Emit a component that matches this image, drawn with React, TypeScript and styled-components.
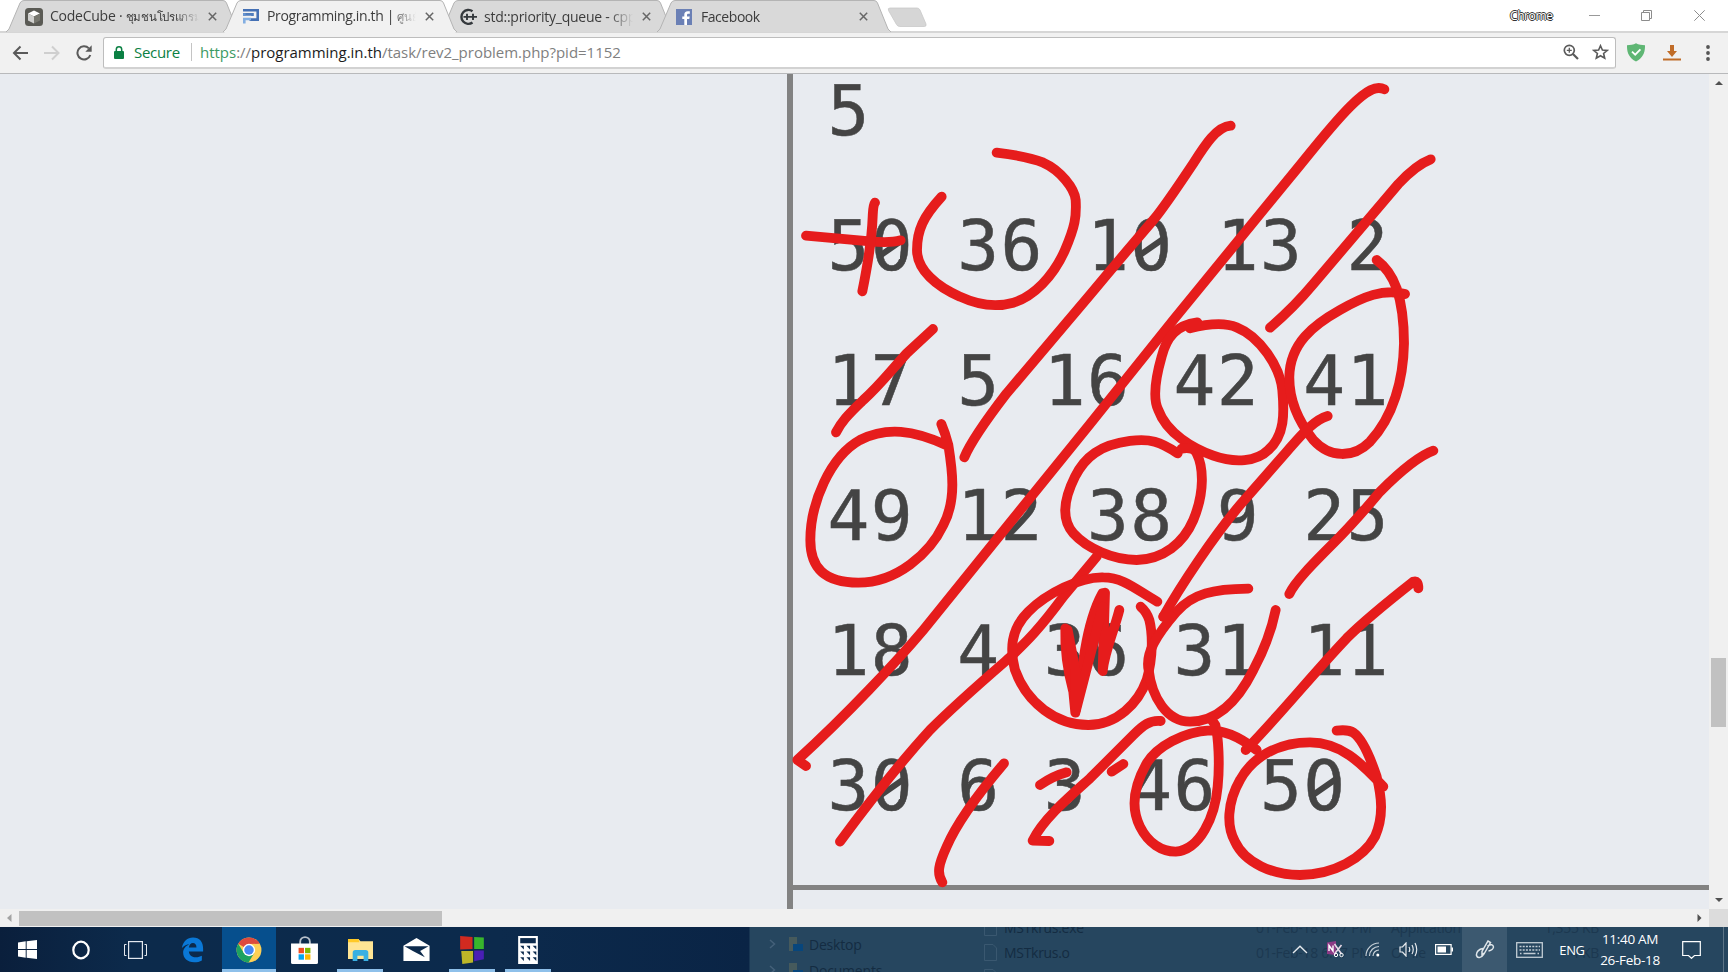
import React from "react";
import styled, { createGlobalStyle } from "styled-components";

const Global = createGlobalStyle`
  * { box-sizing: border-box; }
  html, body { margin: 0; padding: 0; overflow: hidden; background: #fff; }
  body { font-family: "Open Sans", "Noto Sans", sans-serif; }
  svg { display: block; }
`;

const Screen = styled.div`
  width: 1728px;
  height: 972px;
  display: flex;
  flex-direction: column;
  overflow: hidden;
`;

/* ---------- tab strip ---------- */
const TabStrip = styled.div`
  height: 33px;
  display: flex;
  align-items: flex-start;
  padding-left: 6px;
  background: #fff;
  border-bottom: 2px solid #d6d6d6;
`;

const Tab = styled.div<{ $active?: boolean }>`
  position: relative;
  z-index: ${(p) => (p.$active ? 2 : 1)};
  width: 234px;
  height: 33px;
  flex: none;
  margin-right: -17px;
  padding: 0 17px 0 19px;
  display: flex;
  align-items: center;
`;

const TabShape = styled.svg`
  position: absolute;
  left: 0;
  top: 0;
  z-index: -1;
`;

const TabIcon = styled.div`
  width: 18px;
  height: 18px;
  flex: none;
`;

const TabTitle = styled.div<{ $spacing: number }>`
  width: 149px;
  margin: 0 0 0 7px;
  overflow: hidden;
  white-space: nowrap;
  font-size: 14px;
  line-height: 24px;
  letter-spacing: ${(p) => p.$spacing}px;
  color: #3c3c3c;
  -webkit-mask-image: linear-gradient(to right, #000 84%, transparent 100%);
`;

const Thai = styled.span`
  font-size: 11.5px;
  letter-spacing: -0.3px;
`;

const TabClose = styled.svg`
  margin-left: 9px;
  flex: none;
`;

const NewTab = styled.svg`
  margin: 7px 0 0 1px;
`;

const WindowControls = styled.div`
  margin-left: auto;
  height: 31px;
  display: flex;
  align-items: center;
`;

const ChromeLabel = styled.span`
  width: 48px;
  margin-right: 8px;
  font-size: 12px;
  letter-spacing: -0.4px;
  color: #fff;
  text-shadow: 1px 0 #333, -1px 0 #333, 0 1px #333, 0 -1px #333;
`;

const WindowButton = styled.div<{ $w: number }>`
  width: ${(p) => p.$w}px;
  display: flex;
  justify-content: center;
`;

/* ---------- toolbar ---------- */
const Toolbar = styled.div`
  height: 41px;
  display: flex;
  align-items: center;
  padding: 0 12px 1px 12px;
  background: #f1f1f1;
  border-bottom: 1px solid #b8b9bb;
`;

const NavButtons = styled.div`
  width: 91px;
  display: flex;
  align-items: center;
  gap: 15px;
`;

const Omnibox = styled.div`
  width: 1513px;
  height: 32px;
  display: flex;
  align-items: center;
  padding: 0 6px 0 10px;
  background: #fff;
  border: 1px solid #bdbdbd;
  border-bottom: 2px solid #d2d2d2;
  border-radius: 3px;
`;

const Secure = styled.span`
  margin-left: 10px;
  width: 57px;
  font-size: 15px;
  letter-spacing: -0.3px;
  color: #0b8043;
`;

const Separator = styled.span`
  width: 1px;
  height: 18px;
  background: #c4c4c4;
`;

const Url = styled.span`
  margin-left: 8px;
  flex: 1;
  font-size: 15px;
  letter-spacing: -0.02px;
  color: #808080;
  white-space: nowrap;
`;

const Scheme = styled.span` color: #3c9a64; `;
const Host = styled.span` color: #1c1c1c; `;

const OmniIcons = styled.div`
  display: flex;
  gap: 13px;
`;

const Extensions = styled.div`
  margin-left: 11px;
  display: flex;
  align-items: center;
`;

const Slot = styled.div<{ $w: number }>`
  width: ${(p) => p.$w}px;
  flex: none;
`;

/* ---------- page ---------- */
const Viewport = styled.div`
  height: 853px;
  display: grid;
  grid-template-columns: 1709px 19px;
  grid-template-rows: 835px 18px;
`;

const Page = styled.div`
  position: relative;
  overflow: hidden;
  display: flex;
  background: #e8ebf0;
`;

const BlankCell = styled.div`
  width: 787px;
  flex: none;
`;

const SampleColumn = styled.div`
  flex: 1;
  border-left: 6px solid #828282;
`;

const SampleCell = styled.div`
  height: 816px;
  border-bottom: 5px solid #828282;
  overflow: hidden;
`;

const Sample = styled.pre`
  margin: -31px 0 0 34.5px;
  font-family: "DejaVu Sans Mono", monospace;
  font-size: 69.5px;
  line-height: 135px;
  letter-spacing: 1.4px;
  color: #444;
  -webkit-text-stroke: 0.5px #444;
`;

const Zero = styled.span`
  position: relative;
  &::before {
    content: "";
    position: absolute;
    left: 14px;
    top: 30px;
    width: 15px;
    height: 24px;
    background: #e8ebf0;
  }
  &::after {
    content: "";
    position: absolute;
    left: 7px;
    top: 39px;
    width: 29px;
    height: 6px;
    background: #444;
    transform: rotate(-35deg);
  }
`;

const Ink = styled.svg`
  position: absolute;
  left: 0;
  top: 0;
`;

const VScroll = styled.div`
  display: flex;
  flex-direction: column;
  align-items: center;
  background: #f0f0f0;
`;

const VTrack = styled.div`
  flex: 1;
  width: 15px;
  padding-top: 566px;
`;

const VThumb = styled.div`
  height: 69px;
  background: #c1c1c1;
`;

const HScroll = styled.div`
  display: flex;
  align-items: center;
  background: #f0f0f0;
`;

const HTrack = styled.div`
  flex: 1;
`;

const HThumb = styled.div`
  width: 423px;
  height: 15px;
  margin-left: 1px;
  background: #c1c1c1;
`;

const ArrowBox = styled.div`
  width: 18px;
  height: 18px;
  flex: none;
  display: flex;
  align-items: center;
  justify-content: center;
`;

const Corner = styled.div`
  background: #dcdcdc;
`;

/* ---------- taskbar ---------- */
const Taskbar = styled.div`
  position: relative;
  height: 45px;
  display: flex;
  background: linear-gradient(90deg, #0a1f3c 0, #0c2a4b 130px, #0c2a4c 500px, #0a2445 749px, #26465f 750px);
  overflow: hidden;
`;

const Pinned = styled.div`
  width: 749px;
  flex: none;
  display: flex;
`;

const TaskButton = styled.div<{ $w: number; $active?: boolean }>`
  width: ${(p) => p.$w}px;
  height: 45px;
  flex: none;
  display: flex;
  align-items: center;
  justify-content: center;
  background-color: ${(p) => (p.$active ? "#064f8d" : "transparent")};
`;

const Running = styled(TaskButton)<{ $inset: number }>`
  background-image: linear-gradient(#8ec0ea, #8ec0ea);
  background-repeat: no-repeat;
  background-position: center bottom;
  background-size: calc(100% - ${(p) => p.$inset * 2}px) 3px;
`;

const GhostTree = styled.div`
  position: absolute;
  left: 767px;
  top: 4px;
  font-size: 14px;
  letter-spacing: -0.2px;
  color: #142c42;
`;

const GhostTreeRow = styled.div`
  height: 26px;
  display: flex;
  align-items: center;
  gap: 6px;
  svg:first-child { margin-right: 5px; }
`;

const GhostFiles = styled.div`
  position: absolute;
  left: 984px;
  top: -12px;
  font-size: 14px;
  letter-spacing: -0.3px;
  color: #142c42;
`;

const GhostFileRow = styled.div`
  height: 25px;
  display: grid;
  grid-template-columns: 20px 252px 135px 208px;
  align-items: center;
  white-space: nowrap;
`;

const Faint = styled.span`
  color: #1c3850;
`;

const FileMeta = styled.div`
  display: flex;
  justify-content: space-between;
`;

const Tray = styled.div`
  position: relative;
  margin-left: auto;
  height: 45px;
  display: flex;
  align-items: center;
  color: #fff;
`;

const TrayItem = styled.div<{ $w: number; $lit?: boolean }>`
  width: ${(p) => p.$w}px;
  height: 45px;
  display: flex;
  align-items: center;
  justify-content: center;
  background: ${(p) => (p.$lit ? "#3c5970" : "transparent")};
`;

const Lang = styled.span`
  font-size: 13px;
  letter-spacing: -0.4px;
`;

const Clock = styled.div`
  width: 64px;
  margin-left: 5px;
  text-align: center;
  font-size: 13.5px;
  line-height: 20.5px;
  letter-spacing: -0.3px;
  white-space: nowrap;
`;

const ShowDesktop = styled.div`
  width: 5px;
  height: 45px;
  margin-left: 3px;
  border-left: 1px solid #5d7587;
`;

const strokes = [
  "M78 497 L270 514 Q330 520 362 511",
  "M285 398 C279 406 279 420 278 440 C275 520 262 590 247 664",
  "M485 380 C430 440 411 480 411 540 C411 600 470 650 540 680 C600 708 650 712 700 698 C760 680 820 620 855 540 C885 470 890 440 887 390 C884 355 840 300 790 278 C750 262 700 254 650 248",
  "M459 777 L380 850 C330 905 300 945 250 990 C200 1038 185 1055 168 1087",
  "M500 1126 C400 1080 320 1070 240 1110 C150 1160 91 1300 91 1410 C91 1490 130 1538 235 1538 C350 1538 450 1450 490 1365 C530 1290 517 1200 505 1125 Q496 1090 484 1062",
  "M1352 167 C1310 170 1275 225 1240 280 C1190 355 1150 415 1120 450 C1060 520 1000 590 930 675 L680 970 C630 1035 575 1110 553 1162",
  "M1813 58 C1790 45 1760 60 1710 110 C1650 170 1590 250 1530 322 L1180 750 L930 1062 L640 1420 L430 1680 C350 1775 200 1935 52 2070 L78 2088",
  "M1952 268 C1915 282 1880 315 1855 342 L1600 642 C1560 690 1530 722 1470 773",
  "M1252 757 C1190 765 1160 800 1145 860 C1125 930 1120 990 1135 1020 C1160 1090 1240 1135 1300 1157 C1365 1180 1430 1175 1465 1140 C1515 1095 1513 1030 1507 960 C1500 890 1440 800 1370 772 C1330 755 1280 762 1230 775",
  "M1875 672 C1810 655 1750 680 1680 720 C1600 765 1530 820 1528 920 C1527 1000 1560 1060 1600 1110 C1650 1165 1720 1165 1770 1115 C1840 1040 1870 930 1872 820 C1872 760 1865 700 1850 655 Q1830 600 1790 570",
  "M1643 1038 C1600 1050 1560 1100 1520 1145 L1380 1305 C1300 1400 1200 1550 1150 1640",
  "M1193 1150 C1140 1115 1110 1105 1050 1113 C960 1125 915 1160 885 1220 C850 1290 845 1350 880 1390 C920 1435 1000 1470 1070 1470 C1150 1468 1210 1420 1240 1350 C1275 1265 1270 1190 1250 1150 Q1240 1130 1205 1136",
  "M1960 1142 C1910 1160 1850 1215 1800 1265 C1750 1325 1710 1370 1660 1420 C1600 1480 1545 1535 1528 1572",
  "M950 1460 L850 1580 C780 1675 740 1715 690 1762 C600 1840 530 1900 450 1980 C340 2100 250 2220 180 2315",
  "M1132 1595 C1070 1560 1030 1522 970 1522 C900 1520 800 1570 745 1625 C690 1680 690 1740 705 1800 C740 1900 830 1965 925 1965 C1010 1965 1075 1900 1100 1830 C1120 1760 1118 1690 1108 1650 Q1100 1625 1082 1610",
  "M856 1675 C854 1740 865 1810 880 1865 L886 1928 L915 1740 C925 1680 945 1610 967 1570 L975 1568 L968 1803 C975 1740 1000 1690 1018 1620",
  "M863 1680 L886 1800 L888 1920 L932 1750 L968 1610",
  "M1405 1556 C1300 1557 1240 1570 1190 1625 C1130 1695 1095 1750 1106 1800 C1115 1880 1160 1955 1230 1955 C1320 1955 1380 1880 1420 1800 C1455 1735 1475 1680 1487 1620",
  "M1150 1640 L1175 1640",
  "M1915 1555 Q1915 1530 1900 1535 C1830 1590 1760 1645 1700 1705 C1600 1810 1500 1935 1397 2040",
  "M1142 1953 C1110 1950 1090 1965 1060 1995 L930 2125 C880 2170 790 2245 758 2312 L808 2313",
  "M780 2145 Q820 2118 860 2107",
  "M995 2105 L1030 2082",
  "M1430 2040 C1370 1995 1330 1982 1290 1981 C1210 1985 1130 2030 1100 2080 C1055 2160 1055 2220 1080 2270 C1105 2320 1145 2345 1187 2345 C1260 2340 1305 2240 1313 2150 C1320 2080 1315 2000 1306 1965 L1292 1945",
  "M1810 2150 C1740 2075 1680 2017 1590 2017 C1490 2017 1415 2065 1380 2130 C1340 2200 1340 2270 1365 2315 C1395 2380 1480 2415 1560 2415 C1660 2415 1750 2365 1785 2300 C1812 2240 1805 2180 1790 2120 C1770 2060 1745 2005 1720 1988 Q1705 1978 1670 1982",
  "M672 2080 C600 2165 530 2260 500 2330 C475 2385 470 2410 487 2437",
];

const lines = ["5", "50 36 10 13 2", "17 5 16 42 41", "49 12 38 9 25", "18 4 36 31 11", "30 6 3 46 50"];

function CubeIcon() {
  return (
    <svg width="18" height="18" viewBox="0 0 18 18">
      <rect width="18" height="18" rx="3.5" fill="#5a5a54" />
      <path d="M9 2.6 15 5.6 9 8.4 3 5.6Z" fill="#fff" />
      <path d="M3 5.6 9 8.4V15.5L3 12.6Z" fill="#d0d0ce" />
      <path d="M15 5.6 9 8.4V15.5L15 12.6Z" fill="#77776f" />
    </svg>
  );
}

function ProgIcon() {
  return (
    <svg width="18" height="18" viewBox="0 0 18 18" fill="none" strokeWidth="2.6">
      <path d="M1 2.2H15.7V11.6H7.5" stroke="#4470b4" />
      <path d="M1 6.4H10.5V8" stroke="#4f7cbc" />
      <path d="M2.3 15.5V11H9" stroke="#82aee2" />
      <path d="M2.3 8V5.2" stroke="#6794d0" />
    </svg>
  );
}

function CppIcon() {
  return (
    <svg width="18" height="18" viewBox="0 0 18 18" fill="none" stroke="#34383c">
      <path d="M13.5 3.2A7 7 0 1 0 13.5 14.6" strokeWidth="2.4" />
      <path d="M4.500 8.900H18M8 5.800V12M14 5.800V12" strokeWidth="1.900" />
    </svg>
  );
}

function FbIcon() {
  return (
    <svg width="16" height="18" viewBox="0 0 16 18">
      <rect y="1" width="16" height="16" fill="#6b80b5" />
      <path d="M11 17V11H13.3L13.7 8.4H11V7C11 6.2 11.4 5.7 12.4 5.7H13.8V3.3H11.8C9.5 3.3 8.3 4.6 8.3 6.7V8.4H6.3V11H8.3V17Z" fill="#fff" />
    </svg>
  );
}

const tabs = [
  { title: "CodeCube · ", thai: "ชุมชนโปรแกรมเมอร์", icon: <CubeIcon />, spacing: -0.25 },
  { title: "Programming.in.th | ", thai: "ศูนย์กลาง", icon: <ProgIcon />, spacing: -0.35, active: true },
  { title: "std::priority_queue - cppreference", icon: <CppIcon />, spacing: -0.25 },
  { title: "Facebook", icon: <FbIcon />, spacing: -0.45 },
];

function Triangle({ d, color }: { d: string; color: string }) {
  return (
    <svg width="10" height="10" viewBox="0 0 10 10">
      <path d={d} fill={color} />
    </svg>
  );
}

function FileIcon() {
  return (
    <svg width="13" height="17" viewBox="0 0 13 17" fill="none" stroke="#3a5870">
      <path d="M.5 .5H9L12.5 4V16.5H.5Z" />
    </svg>
  );
}

export default function App() {
  return (
    <Screen>
      <Global />
      <TabStrip>
        {tabs.map((t) => (
          <Tab key={t.title} $active={t.active}>
            <TabShape width="234" height="33" viewBox="0 0 234 33">
              <path
                d="M0 32 L3 29 L14 3 Q15.3 .5 18 .5 H217 Q219.5 .5 220.5 3 L231 29 L234 32"
                fill={t.active ? "#f1f1f1" : "#d9d9d9"}
                stroke="#b4b4b4"
              />
              {t.active && <rect x="1.5" y="31.3" width="231" height="2" fill="#f1f1f1" />}
            </TabShape>
            <TabIcon>{t.icon}</TabIcon>
            <TabTitle $spacing={t.spacing}>
              {t.title}
              {t.thai && <Thai>{t.thai}</Thai>}
            </TabTitle>
            <TabClose width="9" height="9" viewBox="0 0 9 9">
              <path d="M.8 .8 8.2 8.2M8.2 .8 .8 8.2" stroke="#666" strokeWidth="1.5" />
            </TabClose>
          </Tab>
        ))}
        <NewTab width="52" height="21" viewBox="0 0 52 21">
          <path d="M15 1H42Q44 1 45 3L51 17Q51.500 19.500 49.500 19.500H25Q22.500 19.500 21.500 17.500L13.500 3.500Q12.500 1 15 1Z" fill="#d6d6d6" stroke="#c9c9c9" strokeWidth=".8" />
        </NewTab>
        <WindowControls>
          <ChromeLabel>Chrome</ChromeLabel>
          <WindowButton $w={57}>
            <svg width="11" height="11" viewBox="0 0 11 11"><path d="M0 5.500H11" stroke="#999" /></svg>
          </WindowButton>
          <WindowButton $w={47}>
            <svg width="11" height="11" viewBox="0 0 11 11" fill="none" stroke="#8c8c8c">
              <path d="M.5 2.500H8.500V10.500H.5ZM2.500 2.500V.5H10.500V8.500H8.500" />
            </svg>
          </WindowButton>
          <WindowButton $w={58}>
            <svg width="11" height="11" viewBox="0 0 11 11"><path d="M.3 .3 10.700 10.700M10.700 .3 .3 10.700" stroke="#8c8c8c" /></svg>
          </WindowButton>
        </WindowControls>
      </TabStrip>

      <Toolbar>
        <NavButtons>
          <svg width="17" height="16" viewBox="0 0 17 16" fill="none" stroke="#5a5a5a" strokeWidth="2">
            <path d="M16 8H3M8.500 1.500 2 8 8.500 14.500" />
          </svg>
          <svg width="17" height="16" viewBox="0 0 17 16" fill="none" stroke="#cfcfcf" strokeWidth="2">
            <path d="M0 8H14M8 1.500 14.500 8 8 14.500" />
          </svg>
          <svg width="17" height="16" viewBox="0 0 17 16" fill="none">
            <path d="M14.300 10A6.600 6.600 0 1 1 12.900 3.400" stroke="#5a5a5a" strokeWidth="2" />
            <path d="M15.700 .3V6.700H9.300Z" fill="#5a5a5a" />
          </svg>
        </NavButtons>
        <Omnibox>
          <svg width="10" height="13" viewBox="0 0 10 13">
            <rect y="5" width="10" height="8" rx="1" fill="#0b8043" />
            <path d="M2.300 5.500V3.500A2.700 2.700 0 0 1 7.700 3.500V5.500" fill="none" stroke="#0b8043" strokeWidth="1.500" />
          </svg>
          <Secure>Secure</Secure>
          <Separator />
          <Url>
            <Scheme>https</Scheme>://<Host>programming.in.th</Host>/task/rev2_problem.php?pid=1152
          </Url>
          <OmniIcons>
            <svg width="16" height="16" viewBox="0 0 16 16" fill="none" stroke="#5a5a5a">
              <circle cx="6.300" cy="6.300" r="5" strokeWidth="1.700" />
              <path d="M10 10 15 15" strokeWidth="2.200" />
              <path d="M6.300 3.800V8.800M3.800 6.300H8.800" strokeWidth="1.300" />
            </svg>
            <svg width="17" height="16" viewBox="0 0 17 16" fill="none" stroke="#5a5a5a" strokeWidth="1.600">
              <path d="M8.500 1.700 10.400 6 15.200 6.400 11.600 9.500 12.700 14.200 8.500 11.700 4.300 14.200 5.400 9.500 1.800 6.400 6.600 6Z" />
            </svg>
          </OmniIcons>
        </Omnibox>
        <Extensions>
          <Slot $w={36}>
            <svg width="18" height="19" viewBox="0 0 18 19">
              <path d="M9 .3C11.500 1.700 15 2.200 18 2.200C18.200 9.500 16.200 14.800 9 18.600C1.800 14.800-.2 9.500 0 2.200C3 2.200 6.500 1.700 9 .3Z" fill="#5fb674" />
              <path d="M5 8.700 8.200 11.700 13.400 6.300" stroke="#fff" strokeWidth="1.800" fill="none" />
            </svg>
          </Slot>
          <Slot $w={43}>
            <svg width="18" height="16" viewBox="0 0 18 16" fill="#c06c28">
              <path d="M7 0H11V6H14L9 12 4 6H7Z" />
              <rect y="13.500" width="18" height="2" />
            </svg>
          </Slot>
          <svg width="4" height="16" viewBox="0 0 4 16" fill="#555">
            <circle cx="2" cy="2" r="1.900" /><circle cx="2" cy="8" r="1.900" /><circle cx="2" cy="14" r="1.900" />
          </svg>
        </Extensions>
      </Toolbar>

      <Viewport>
        <Page>
          <BlankCell />
          <SampleColumn>
            <SampleCell>
              <Sample>
                {lines.map((line, i) => (
                  <React.Fragment key={i}>
                    {line.split("").map((c, j) => (c === "0" ? <Zero key={j}>0</Zero> : c))}
                    {"\n"}
                  </React.Fragment>
                ))}
              </Sample>
            </SampleCell>
          </SampleColumn>
          <Ink width="1709" height="835" viewBox="0 0 1709 835">
            <g transform="translate(780 -4) scale(.33333)" fill="none" stroke="#e61c1c" strokeWidth="29.500" strokeLinecap="round" strokeLinejoin="round">
              {strokes.map((d, i) => (
                <path key={i} d={d} />
              ))}
            </g>
          </Ink>
        </Page>
        <VScroll>
          <ArrowBox><Triangle d="M5 3 9 7H1Z" color="#505050" /></ArrowBox>
          <VTrack><VThumb /></VTrack>
          <ArrowBox><Triangle d="M5 7 9 3H1Z" color="#505050" /></ArrowBox>
        </VScroll>
        <HScroll>
          <ArrowBox><Triangle d="M3 5 7.500 1V9Z" color="#a3a3a3" /></ArrowBox>
          <HTrack><HThumb /></HTrack>
          <ArrowBox><Triangle d="M6.500 5 2.500 1V9Z" color="#505050" /></ArrowBox>
        </HScroll>
        <Corner />
      </Viewport>

      <Taskbar>
        <GhostTree>
          {["Desktop", "Documents"].map((name) => (
            <GhostTreeRow key={name}>
              <svg width="10" height="10" viewBox="0 0 10 10"><path d="M3 1 7.500 5 3 9" stroke="#446079" fill="none" strokeWidth="1.500" /></svg>
              <svg width="15" height="15" viewBox="0 0 15 15">
                <path d="M1 0H9V14H1Z" fill="#465a5c" />
                <rect x="5" y="7" width="10" height="7" fill="#07467c" />
              </svg>
              <span>{name}</span>
            </GhostTreeRow>
          ))}
        </GhostTree>
        <GhostFiles>
          {[
            ["MSTkrus.exe", "01-Feb-18 6:17 PM", "Application", "1,355 KB"],
            ["MSTkrus.o", "01-Feb-18 6:17 PM", "O File", "4 KB"],
            ["MSTkrus", "01-Feb-18 5:59 PM", "C File", "1 KB"],
          ].map((r) => (
            <GhostFileRow key={r[0]}>
              <FileIcon />
              <span>{r[0]}</span>
              <Faint>{r[1]}</Faint>
              <FileMeta>
                <Faint>{r[2]}</Faint>
                <Faint>{r[3]}</Faint>
              </FileMeta>
            </GhostFileRow>
          ))}
        </GhostFiles>
        <Pinned>
          <TaskButton $w={54}>
            <svg width="19" height="19" viewBox="0 0 18 18" fill="#fff">
              <path d="M0 2.300 7.300 1.300V8.500H0ZM8.200 1.200 18 0V8.500H8.200ZM0 9.400H7.300V16.700L0 15.700ZM8.200 9.400H18V18L8.200 16.800Z" />
            </svg>
          </TaskButton>
          <TaskButton $w={54}>
            <svg width="20" height="20" viewBox="0 0 20 20"><ellipse cx="10" cy="10" rx="7.700" ry="8.300" fill="none" stroke="#fff" strokeWidth="2.200" /></svg>
          </TaskButton>
          <TaskButton $w={54}>
            <svg width="23" height="18" viewBox="0 0 23 18" fill="none" stroke="#e4e8ee">
              <rect x="4.600" y=".6" width="13.800" height="16.800" strokeWidth="1.200" />
              <path d="M2.500 3.500H.5V14.500H2.500M20.500 3.500H22.500V14.500H20.500" />
            </svg>
          </TaskButton>
          <TaskButton $w={60}>
            <svg width="23" height="26" viewBox="0 0 22 25">
              <path d="M.8 10.500C2 4 6 .5 11.500 .5C18 .5 21.200 5 21.200 11V14H7.500C8 18 11 19.500 14 19.500C16.500 19.500 18.500 18.800 20 18V22.500C18 23.700 15.500 24.300 12.500 24.300C6 24.300 2 20.500 2 15C2 11.500 4.500 8.500 8 7C5.500 7 2.800 8.500.8 10.500ZM7.500 10H14.800C14.800 7.200 13.500 5.700 11.400 5.700C9.300 5.700 7.900 7.500 7.500 10Z" fill="#0a78d7" />
            </svg>
          </TaskButton>
          <Running $w={54} $active $inset={0}>
            <svg width="26" height="26" viewBox="0 0 24 24">
              <circle cx="12" cy="12" r="11.500" fill="#fdd056" />
              <path d="M12 12 2.040 6.250A11.500 11.500 0 0 1 21.960 6.250L12 6.500Z" fill="#dc4a3e" />
              <path d="M2.040 6.250A11.500 11.500 0 0 0 11.600 23.500L16.800 14.700 7.300 14.700Z" fill="#1da261" />
              <circle cx="12" cy="12" r="5.700" fill="#fff" />
              <circle cx="12" cy="12" r="4.400" fill="#4587f4" />
            </svg>
          </Running>
          <TaskButton $w={56}>
            <svg width="27" height="28" viewBox="0 0 25 26">
              <path d="M8.500 8V5.500A4.500 4.500 0 0 1 17.500 5.500V8" fill="none" stroke="#b9c2cc" strokeWidth="1.700" />
              <path d="M0 7H25V24.500Q25 26 23.500 26H1.500Q0 26 0 24.500Z" fill="#fff" />
              <rect x="7" y="11" width="5" height="5" fill="#f04e23" /><rect x="13" y="11" width="5" height="5" fill="#80b900" />
              <rect x="7" y="17" width="5" height="5" fill="#05a5ee" /><rect x="13" y="17" width="5" height="5" fill="#fdb900" />
            </svg>
          </TaskButton>
          <Running $w={56} $inset={5}>
            <svg width="25" height="23" viewBox="0 0 24 22">
              <path d="M0 1H10L12 3H24V20H0Z" fill="#ffe594" />
              <path d="M0 1H10L11 4H0Z" fill="#ffc926" />
              <path d="M4.500 22V14Q4.500 11.500 7 11.500H17Q19.500 11.500 19.500 14V22H15V17H9V22Z" fill="#3ab0e2" />
            </svg>
          </Running>
          <TaskButton $w={56}>
            <svg width="27" height="23" viewBox="0 0 25 22">
              <path d="M0 7.500 12.500 0 25 7.500V22H0Z" fill="#fff" />
              <path d="M1 7.800H24L16 12.500 20.500 18.500 9 12.500Z" fill="#0c2a4c" />
            </svg>
          </TaskButton>
          <Running $w={56} $inset={5}>
            <svg width="26" height="28" viewBox="0 0 24 26">
              <path d="M1 0 12.500 1V12L1 12.500Z" fill="#d12a20" /><path d="M14 1 23 1.500V12H14Z" fill="#38b52c" />
              <path d="M2 14H13V24.500L3 26Z" fill="#bdb728" /><path d="M14 13.500H23V21.500L14 23.500Z" fill="#4a1fb5" />
            </svg>
          </Running>
          <Running $w={56} $inset={5}>
            <svg width="20" height="28" viewBox="0 0 19 27">
              <rect width="19" height="27" fill="#fff" />
              <rect x="2" y="2" width="15" height="5" fill="#0c2a4c" />
              {[9.5, 15, 20.5].map((y) => [2, 8, 14].map((x) => <path key={`${x}-${y}`} d={`M${x} ${y}h3.500v3.500z`} fill="#0c2a4c" />))}
            </svg>
          </Running>
        </Pinned>
        <Tray>
          <TrayItem $w={34}>
            <svg width="16" height="9" viewBox="0 0 16 9"><path d="M1 8 8 1.200 15 8" fill="none" stroke="#e6eaee" strokeWidth="1.400" /></svg>
          </TrayItem>
          <TrayItem $w={37}>
            <svg width="17" height="17" viewBox="0 0 17 17" fill="none">
              <path d="M0 1.500 9 0V14L0 13Z" fill="#8c3b86" />
              <path d="M2 10V4.500L6 10V4.500" stroke="#fff" strokeWidth="1.400" />
              <path d="M7.500 3 14.500 13M14.500 4 7.500 13" stroke="#e6d7e6" strokeWidth="1.600" />
              <circle cx="9" cy="14" r="1.700" stroke="#fff" /><circle cx="14.500" cy="14" r="1.700" stroke="#fff" />
            </svg>
          </TrayItem>
          <TrayItem $w={36}>
            <svg width="15" height="15" viewBox="0 0 15 15" fill="none" stroke="#c6d0d8" strokeWidth="1.200">
              <path d="M1 14A13 13 0 0 1 14 1M4.500 14A9.500 9.500 0 0 1 14 4.500M8 14A6 6 0 0 1 14 8" />
              <circle cx="12.800" cy="13" r="1.500" fill="#fff" stroke="none" />
            </svg>
          </TrayItem>
          <TrayItem $w={36}>
            <svg width="19" height="15" viewBox="0 0 19 15" fill="none" stroke="#e6eaee" strokeWidth="1.200">
              <path d="M1 5H3.500L7 1V14L3.500 10H1ZM10 5Q11.500 7.500 10 10M13 3Q15.500 7.500 13 12M16 1Q19.500 7.500 16 14" />
            </svg>
          </TrayItem>
          <TrayItem $w={36}>
            <svg width="18" height="11" viewBox="0 0 18 11">
              <rect x=".6" y=".6" width="15.500" height="9.800" fill="none" stroke="#fff" strokeWidth="1.200" />
              <rect x="2.500" y="2.500" width="8.500" height="6" fill="#fff" /><rect x="16.500" y="3.500" width="1.500" height="4" fill="#fff" />
            </svg>
          </TrayItem>
          <TrayItem $w={45} $lit>
            <svg width="20" height="20" viewBox="0 0 20 20" fill="none" stroke="#e0e6ea" strokeWidth="1.500">
              <path d="M8 8.500C4 9 1 12 1.500 15.500C2.500 19 7 17.500 9 14L15.500 2.500L13 1L7 11.500V14.500L10 12.500M12.500 6Q18 3 18.500 7Q18 10 13.500 11" />
            </svg>
          </TrayItem>
          <TrayItem $w={44}>
            <svg width="27" height="16" viewBox="0 0 27 16" fill="none" stroke="#c2ccd4" strokeWidth="1.300">
              <rect x=".7" y=".7" width="25.600" height="14.600" />
              <path d="M3.500 4.500H24M3.500 8H24" strokeDasharray="2 1.200" /><path d="M4 11.500H5.500M7.500 11.500H19.500M21.500 11.500H23" />
            </svg>
          </TrayItem>
          <TrayItem $w={42}><Lang>ENG</Lang></TrayItem>
          <Clock>11:40 AM<br />26-Feb-18</Clock>
          <TrayItem $w={58}>
            <svg width="19" height="18" viewBox="0 0 19 18" fill="none" stroke="#fff" strokeWidth="1.200">
              <path d="M.7 .7H18.300V14.500H12.500L9.500 17.300 6.500 14.500H.7Z" />
            </svg>
          </TrayItem>
          <ShowDesktop />
        </Tray>
      </Taskbar>
    </Screen>
  );
}
